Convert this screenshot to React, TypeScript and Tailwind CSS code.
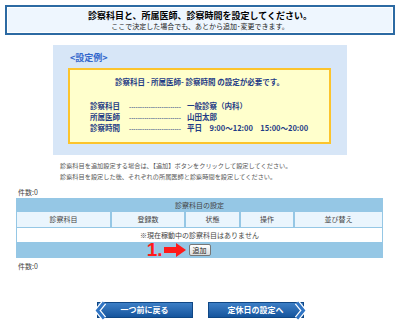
import { ReactNode } from "react";

const exampleRows = [
  { label: "診察科目", value: "一般診察（内科）" },
  { label: "所属医師", value: "山田太郎" },
  { label: "診察時間", value: "平日　9:00～12:00　15:00～20:00" },
];

const columns = ["診察科目", "登録数", "状態", "操作", "並び替え"];

function Chevron({ flip }: { flip?: boolean }) {
  return (
    <svg
      width="13"
      height="19"
      viewBox="0 0 13 19"
      className={flip ? "absolute right-[-4px] top-[-2px] scale-x-[-1]" : "absolute left-[-4px] top-[-2px]"}
    >
      <polyline points="10,1.5 3.5,9.5 10,17.5" fill="none" stroke="#ffffff" strokeWidth="5.5" />
      <polyline points="10,1.5 3.5,9.5 10,17.5" fill="none" stroke="#2f74c4" strokeWidth="3" />
    </svg>
  );
}

function NavButton({ children, flip }: { children: ReactNode; flip?: boolean }) {
  return (
    <div className="relative w-[96px] h-[16px] bg-gradient-to-b from-[#3d7fc6] to-[#15559d] border border-[#0f4785] flex items-center justify-center">
      {!flip && <Chevron />}
      <span className="text-white font-bold text-[8px] leading-none">{children}</span>
      {flip && <Chevron flip />}
    </div>
  );
}

export default function App() {
  return (
    <div className="w-[400px] h-[323px] bg-white overflow-hidden font-['Noto_Sans_CJK_JP','Noto_Sans',sans-serif] text-[#333]">
      {/* header */}
      <div className="mx-[5px] mt-[5px] h-[30px] border-2 border-[#2c6aa3] bg-[#eef6fe] shadow-[inset_0_0_0_1px_#ffffff] flex flex-col items-center justify-center">
        <p className="text-[9px] font-bold leading-[12px] text-black">
          診察科目と、所属医師、診察時間を設定してください。
        </p>
        <p className="text-[7px] leading-[9px] text-[#222]">
          ここで決定した場合でも、あとから追加･変更できます。
        </p>
      </div>

      {/* example */}
      <div className="ml-[53px] mt-[10px] w-[294px] h-[110px] bg-[#d7e6f7] pt-[7px]">
        <div className="pl-[17px] text-[9px] font-bold leading-[12px] text-[#3366cc]">
          &lt;設定例&gt;
        </div>
        <div className="ml-[15px] mt-[4px] w-[263px] h-[76px] border-2 border-[#fcc42c] bg-[#ffffcc] text-[#1f3c86] font-bold">
          <div className="pt-[7px] text-center text-[7.5px] leading-[10px]">
            診察科目 - 所属医師- 診察時間 の設定が必要です。
          </div>
          <div className="mt-[14px] pl-[20px] flex flex-col text-[7.5px] leading-[10px]">
            {exampleRows.map((r) => (
              <div key={r.label} className="flex items-baseline">
                <span className="w-[39px]">{r.label}</span>
                <span className="w-[58px] font-normal font-['Liberation_Sans',sans-serif] text-[6.5px] whitespace-nowrap">
                  ------------------------
                </span>
                <span className="whitespace-pre">{r.value}</span>
              </div>
            ))}
          </div>
        </div>
      </div>

      {/* instructions */}
      <div className="mt-[5px] pl-[60px] text-[6.2px] leading-[11px] text-[#555]">
        <p>診察科目を追加設定する場合は、【追加】ボタンをクリックして設定してください。</p>
        <p>診察科目を設定した後、それぞれの所属医師と診察時間を設定してください。</p>
      </div>

      <div className="mt-[5px] pl-[18px] text-[7px] leading-[10px] text-[#444]">件数:0</div>

      {/* table */}
      <div className="mt-[1px] ml-[16px] w-[367px] bg-[#95c7e5] text-[7px] text-[#444]">
        <div className="h-[14px] flex items-center justify-center">診察科目の設定</div>
        <div className="grid grid-cols-[93px_72px_53px_52px_1fr] gap-[2px] px-[1px]">
          {columns.map((c) => (
            <div key={c} className="h-[15px] bg-[#eaf5fd] flex items-center justify-center">
              {c}
            </div>
          ))}
        </div>
        <div className="mt-[1px] mx-[1px] h-[14px] bg-white flex items-center justify-center">
          ※現在稼動中の診察科目はありません
        </div>
        <div className="h-[16px] flex items-center justify-center">
          <div className="relative">
            <div className="absolute right-[24px] top-[-4px] flex items-center">
              <span className="text-[#ff1a1a] font-bold text-[19px] leading-[19px] font-['Liberation_Sans',sans-serif]">
                1.
              </span>
              <svg width="23" height="14" viewBox="0 0 23 14" className="ml-[1px]">
                <polygon points="0,4 12,4 12,0 22,7 12,14 12,10 0,10" fill="#ff1a1a" />
              </svg>
            </div>
            <button className="w-[22px] h-[12px] rounded-[2px] border border-[#777] bg-gradient-to-b from-white to-[#dcdcdc] text-[7px] leading-none text-[#222] flex items-center justify-center">
              追加
            </button>
          </div>
        </div>
      </div>

      <div className="mt-[3px] pl-[18px] text-[7px] leading-[10px] text-[#444]">件数:0</div>

      {/* nav */}
      <div className="mt-[31px] flex justify-center gap-[15px]">
        <NavButton>一つ前に戻る</NavButton>
        <NavButton flip>定休日の設定へ</NavButton>
      </div>
    </div>
  );
}
